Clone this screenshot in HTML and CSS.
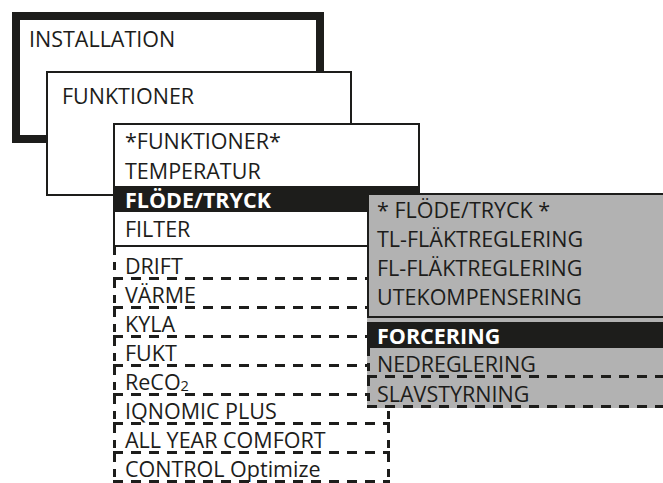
FILE: index.html
```html
<!DOCTYPE html>
<html lang="sv">
<head>
<meta charset="utf-8">
<title>Meny</title>
<link rel="stylesheet" href="styles.css">
</head>
<body>
<div class="canvas">
  <div class="box b1"><div class="label">INSTALLATION</div></div>
  <div class="box b2"><div class="label">FUNKTIONER</div></div>
  <div class="box b3">
    <div class="row r1">*FUNKTIONER*</div>
    <div class="row r2">TEMPERATUR</div>
    <div class="row sel">FLÖDE/TRYCK</div>
    <div class="row r4">FILTER</div>
  </div>
  <div class="dlist">
    <div class="drow first">DRIFT</div>
    <div class="drow">VÄRME</div>
    <div class="drow">KYLA</div>
    <div class="drow">FUKT</div>
    <div class="drow">ReCO<span class="sub">2</span></div>
    <div class="drow">IQNOMIC PLUS</div>
    <div class="drow">ALL YEAR COMFORT</div>
    <div class="drow">CONTROL Optimize</div>
  </div>
  <div class="gbox">
    <div class="gtop">
      <div class="grow">* FLÖDE/TRYCK *</div>
      <div class="grow">TL-FLÄKTREGLERING</div>
      <div class="grow">FL-FLÄKTREGLERING</div>
      <div class="grow">UTEKOMPENSERING</div>
    </div>
    <div class="glow">
      <div class="grow gsel">FORCERING</div>
      <div class="grow gd">NEDREGLERING</div>
      <div class="grow gd">SLAVSTYRNING</div>
    </div>
  </div>
</div>
</body>
</html>
```

FILE: styles.css
```css
* { box-sizing: border-box; }
html, body { margin: 0; padding: 0; background: #fff; }
body {
  font-family: "Open Sans", "Noto Sans", sans-serif;
  font-size: 21.5px;
  color: #1d1d1b;
  width: 663px;
  height: 483px;
  overflow: hidden;
}
.canvas { position: relative; width: 663px; height: 483px; overflow: hidden; }

.box { position: absolute; background: #fff; border: 2px solid #1d1d1b; }
.label { line-height: 28px; white-space: nowrap; }

.b1 { left: 12px; top: 12px; width: 312px; height: 131px; border-width: 8px; }
.b1 .label { padding: 5px 0 0 9px; }

.b2 { left: 46px; top: 71px; width: 306px; height: 125px; }
.b2 .label { padding: 9px 0 0 14px; }

.b3 { left: 113px; top: 123px; width: 307px; height: 124px; display: flex; flex-direction: column; }
.row { padding-left: 10px; display: flex; align-items: center; white-space: nowrap; }
.r1 { height: 30px; }
.r2 { height: 31px; }
.sel { height: 26px; margin: 0 -2px; padding-left: 12px; background: #1d1d1b; color: #fff; font-weight: 700; }
.r4 { height: 33px; }

.dlist { position: absolute; left: 113px; top: 247px; width: 277px; display: flex; flex-direction: column; }
.drow {
  height: 29px;
  padding-left: 12px;
  display: flex;
  align-items: center;
  white-space: nowrap;
  background:
    repeating-linear-gradient(90deg, #1d1d1b 0 10px, transparent 10px 18px) left bottom / 100% 3px no-repeat,
    repeating-linear-gradient(180deg, #1d1d1b 0 8px, transparent 8px 15px) left top / 3px 100% no-repeat,
    repeating-linear-gradient(180deg, #1d1d1b 0 8px, transparent 8px 15px) right top / 3px 100% no-repeat;
}
.drow.first { height: 33px; padding-top: 3px; }
.sub { font-size: 0.68em; position: relative; top: 3px; }

.gbox { position: absolute; left: 367px; top: 193px; width: 300px; background: #b2b2b2; border-top: 2px solid #1d1d1b; }
.gtop { border-left: 2px solid #1d1d1b; border-bottom: 2px solid #1d1d1b; padding-bottom: 5px; }
.grow { height: 29px; padding-left: 8px; display: flex; align-items: center; white-space: nowrap; }
.glow { padding-top: 4px; }
.gsel { height: 26px; background: #1d1d1b; color: #fff; font-weight: 700; padding-left: 10px; }
.gd {
  height: 30px;
  padding-left: 10px;
  background:
    repeating-linear-gradient(90deg, #1d1d1b 0 10px, transparent 10px 18px) left bottom / 100% 3px no-repeat,
    repeating-linear-gradient(180deg, #1d1d1b 0 8px, transparent 8px 15px) left top / 3px 100% no-repeat;
}
```
